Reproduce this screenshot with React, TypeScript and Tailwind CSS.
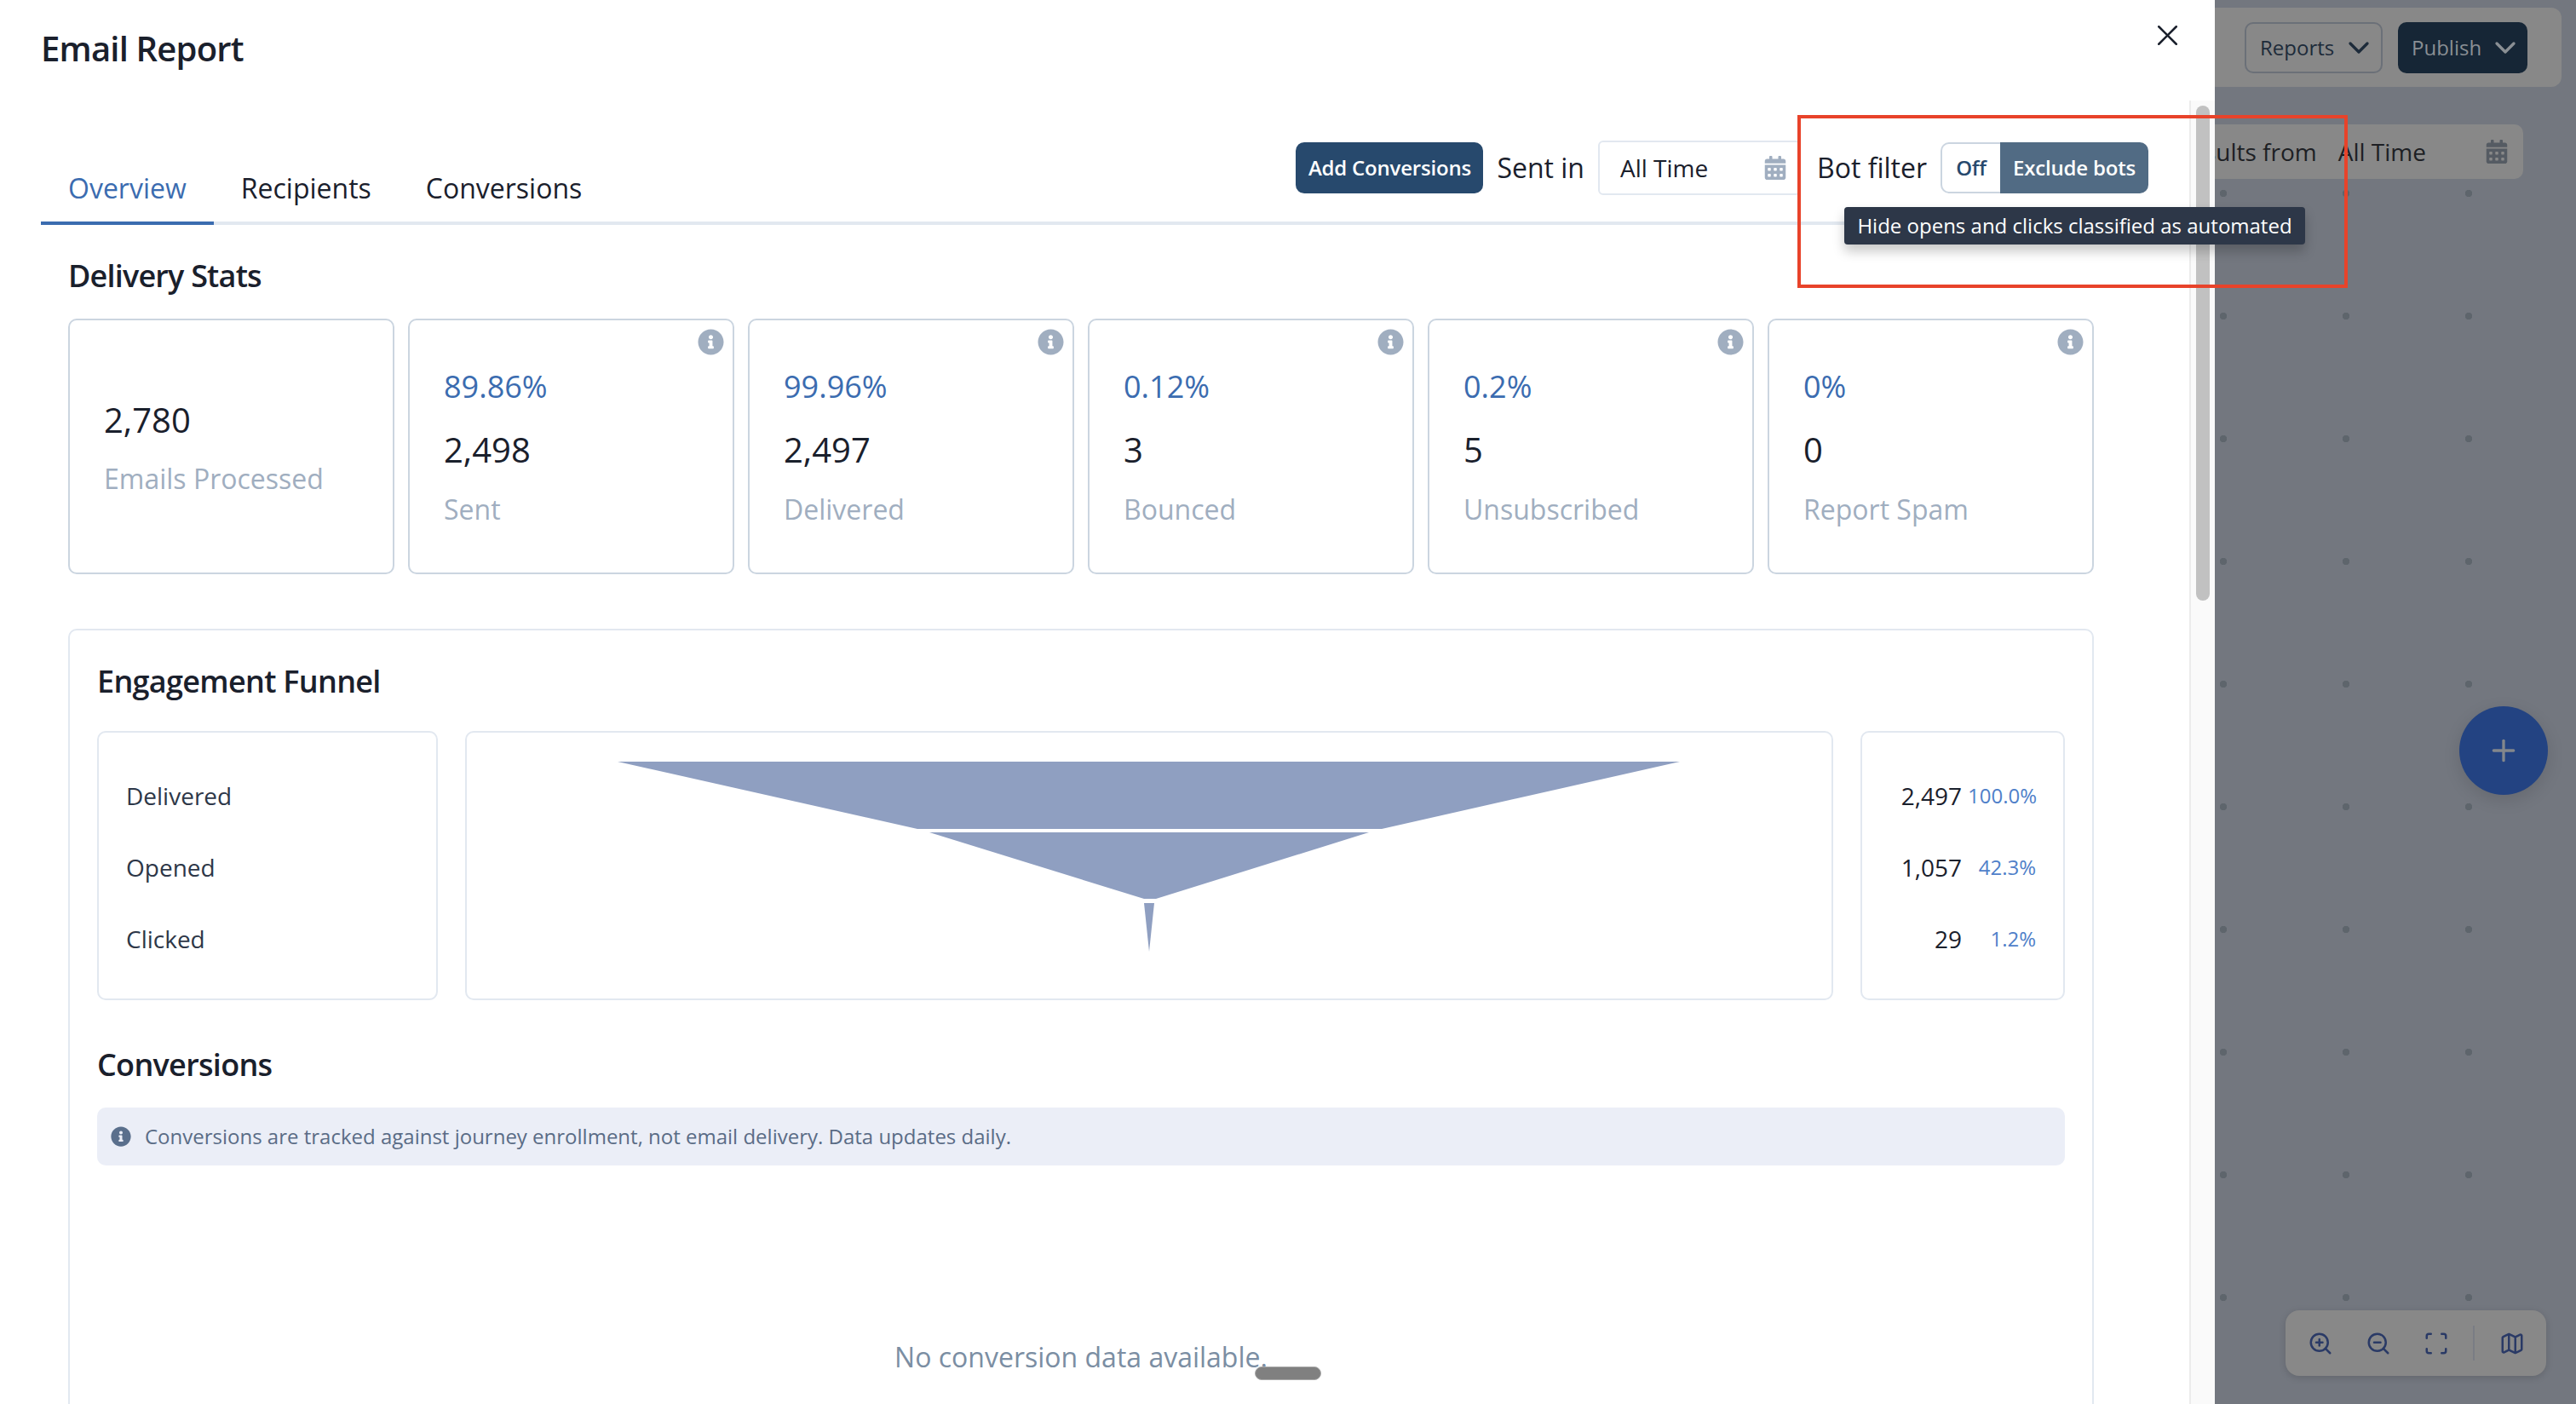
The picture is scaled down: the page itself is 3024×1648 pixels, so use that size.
import React from "react";
import { ChevronDown, Map as MapIcon, Scan, Plus, X, ZoomIn, ZoomOut } from "lucide-react";
import { FaCalendarAlt, FaInfoCircle } from "react-icons/fa";

const stats = [
  { pct: "89.86%", value: "2,498", label: "Sent" },
  { pct: "99.96%", value: "2,497", label: "Delivered" },
  { pct: "0.12%", value: "3", label: "Bounced" },
  { pct: "0.2%", value: "5", label: "Unsubscribed" },
  { pct: "0%", value: "0", label: "Report Spam" },
];

const funnelRows = [
  { label: "Delivered", value: "2,497", pct: "100.0%" },
  { label: "Opened", value: "1,057", pct: "42.3%" },
  { label: "Clicked", value: "29", pct: "1.2%" },
];

function StatCard({ pct, value, label }: { pct: string; value: string; label: string }) {
  return (
    <div className="relative h-[300px] rounded-[10px] border-2 border-[#cbd5e0] pl-[40px] pt-[54px]">
      <FaInfoCircle className="absolute right-[10px] top-[10px] text-[#a0aec0]" size={31} />
      <div className="text-[36px] leading-[48px] text-[#3b6cb0]">{pct}</div>
      <div className="mt-[26px] text-[40px] font-medium leading-[48px] text-[#1a202c]">{value}</div>
      <div className="mt-[22px] text-[32px] leading-[48px] text-[#a0aec0]">{label}</div>
    </div>
  );
}

export default function App() {
  return (
    <div className="relative flex h-[1648px] w-[3024px] overflow-hidden bg-white font-['Open_Sans',sans-serif]">
      {/* Modal */}
      <div className="relative z-10 flex h-full w-[2600px] shrink-0 flex-col bg-white">
        <div className="relative h-[118px] shrink-0 pl-[48px] pt-[33px]">
          <h1 className="text-[40px] font-semibold leading-[48px] tracking-[-0.8px] text-[#1a202c]">Email Report</h1>
          <X className="absolute left-[2524px] top-[21px] text-[#1a202c]" size={41} strokeWidth={1.5} />
        </div>
        <div className="flex min-h-0 flex-1">
          <main className="w-[2570px] shrink-0">
            <div className="mx-[48px] flex justify-between border-b-4 border-[#e2e8f0] pt-[47px]">
              <div className="flex items-end">
                <div className="-mb-[4px] border-b-4 border-[#3b6cb0] px-[32px] pb-[17px] text-[32px] leading-[44px] text-[#3b6cb0]">Overview</div>
                <div className="px-[32px] pb-[17px] text-[32px] leading-[44px] text-[#1a202c]">Recipients</div>
                <div className="px-[32px] pb-[17px] text-[32px] leading-[44px] text-[#1a202c]">Conversions</div>
              </div>
              <div className="flex items-center gap-[16px] pb-[31px]">
                <button className="h-[60px] w-[220px] rounded-[10px] bg-[#27496d] text-[24px] font-semibold tracking-[-0.2px] text-white">Add Conversions</button>
                <span className="text-[32px] text-[#1a202c]">Sent in</span>
                <div className="flex h-[64px] w-[238px] items-center justify-between rounded-[6px] border-2 border-[#e2e8f0] pl-[24px] pr-[14px] text-[28px] text-[#1a202c]">
                  <span>All Time</span>
                  <FaCalendarAlt className="text-[#a0aec0]" size={28} />
                </div>
                <span className="ml-[3px] text-[32px] text-[#1a202c]">Bot filter</span>
                <div className="relative flex h-[60px] w-[244px] text-[24px] font-semibold tracking-[-0.2px]">
                  <div className="flex w-[70px] items-center justify-center rounded-l-[10px] border-2 border-r-0 border-[#cbd5e0] text-[#27496d]">Off</div>
                  <div className="flex flex-1 items-center justify-center rounded-r-[10px] bg-[#516b84] text-white">Exclude bots</div>
                  <div className="absolute left-[-113px] top-[76px] z-20 flex h-[44px] w-[541px] items-center justify-center whitespace-nowrap rounded-[4px] bg-[#2d3748] text-[24px] font-normal tracking-normal text-white shadow-[0_8px_14px_rgba(0,0,0,0.22)]">
                    Hide opens and clicks classified as automated
                  </div>
                </div>
              </div>
            </div>

            <div className="ml-[80px] w-[2378px]">
              <h2 className="mt-[36px] text-[36px] font-semibold leading-[48px] tracking-[-0.8px] text-[#1a202c]">Delivery Stats</h2>
              <div className="mt-[26px] grid grid-cols-6 gap-[16px]">
                <div className="h-[300px] rounded-[10px] border-2 border-[#cbd5e0] pl-[40px] pt-[93px]">
                  <div className="text-[40px] font-medium leading-[48px] text-[#1a202c]">2,780</div>
                  <div className="mt-[21px] text-[32px] leading-[48px] text-[#a0aec0]">Emails Processed</div>
                </div>
                {stats.map((s) => (
                  <StatCard key={s.label} {...s} />
                ))}
              </div>

              <section className="mt-[64px] rounded-[10px] border-2 border-[#e2e8f0] px-[32px] pb-[60px] pt-[36px]">
                <h2 className="text-[36px] font-semibold leading-[48px] tracking-[-0.7px] text-[#1a202c]">Engagement Funnel</h2>
                <div className="mt-[34px] flex h-[316px] gap-[32px]">
                  <div className="flex w-[400px] flex-col justify-center rounded-[10px] border-2 border-[#e2e8f0] pl-[32px] pt-[3px]">
                    {funnelRows.map((r) => (
                      <div key={r.label} className="flex h-[84px] items-center text-[28px] text-[#2d3748]">{r.label}</div>
                    ))}
                  </div>
                  <div className="flex w-[1606px] justify-center rounded-[10px] border-2 border-[#e2e8f0] pt-[34px]">
                    <svg width="1248" height="224" viewBox="725 894 1248 224">
                      <polygon points="725,894 1972,894 1622,973 1077,973" fill="#8f9fc1" />
                      <polygon points="1091,977 1607,977 1357,1055 1343,1055" fill="#8f9fc1" />
                      <polygon points="1343,1060 1355,1060 1349,1117" fill="#8f9fc1" />
                    </svg>
                  </div>
                  <div className="flex w-[240px] flex-col justify-center rounded-[10px] border-2 border-[#e2e8f0] pt-[3px]">
                    {funnelRows.map((r) => (
                      <div key={r.label} className="flex h-[84px] items-center justify-end gap-[7px] pr-[32px]">
                        <span className="text-[28px] font-medium text-[#1a202c]">{r.value}</span>
                        <span className="w-[80px] text-right text-[24px] text-[#4f80c9]">{r.pct}</span>
                      </div>
                    ))}
                  </div>
                </div>
                <h2 className="mt-[52px] text-[36px] font-semibold leading-[48px] tracking-[-0.7px] text-[#1a202c]">Conversions</h2>
                <div className="mt-[26px] flex h-[68px] items-center gap-[16px] rounded-[10px] bg-[#ebeef7] pl-[16px] text-[24px] text-[#5a6c86]">
                  <FaInfoCircle className="text-[#5a6f8c]" size={24} />
                  <span>Conversions are tracked against journey enrollment, not email delivery. Data updates daily.</span>
                </div>
                <div className="mt-[203px] text-center text-[32px] leading-[44px] text-[#7b8ea3]">No conversion data available.</div>
              </section>
            </div>
          </main>
          <aside className="w-[30px] shrink-0 border-l-2 border-[#ececec] bg-[#fafafa] pt-[6px]">
            <div className="mx-auto h-[581px] w-[16px] rounded-full bg-[#c1c1c1]" />
          </aside>
        </div>
      </div>

      {/* Dimmed canvas */}
      <div className="relative flex-1 overflow-hidden bg-[#73777f] bg-[image:radial-gradient(circle,#5e656c_4px,transparent_4.5px)] bg-[length:144px_144px] bg-[position:-62px_11px]">
        <div className="absolute left-0 top-[9px] flex h-[93px] w-[407px] items-center justify-end gap-[18px] rounded-r-[12px] bg-[#888888] pr-[40px] text-[24px] font-medium">
          <div className="flex h-[60px] w-[162px] items-center justify-between rounded-[10px] border-2 border-[#6b7078] pl-[16px] pr-[6px] text-[#1d2b3a]">
            Reports <ChevronDown size={40} strokeWidth={2} />
          </div>
          <div className="flex h-[60px] w-[152px] items-center justify-between rounded-[10px] bg-[#162636] pl-[16px] pr-[6px] text-[#8a8f94]">
            Publish <ChevronDown size={40} strokeWidth={2} />
          </div>
        </div>
        <div className="absolute left-0 top-[146px] flex h-[64px] w-[362px] items-center justify-end whitespace-nowrap rounded-r-[10px] bg-[#888888] pr-[17px] text-[28px] text-[#1d1f24]">
          <span className="shrink-0">results from</span>
          <span className="ml-[25px] shrink-0">All Time</span>
          <FaCalendarAlt className="ml-[69px] shrink-0 text-[#555b63]" size={28} />
        </div>
        <div className="absolute left-[287px] top-[829px] flex h-[104px] w-[104px] items-center justify-center rounded-full bg-[#234382] text-[#83878c] shadow-[0_6px_20px_rgba(0,0,0,0.12)]">
          <Plus size={40} strokeWidth={2} />
        </div>
        <div className="absolute left-[83px] top-[1538px] flex h-[77px] w-[306px] items-center rounded-[16px] bg-[#888888] pl-[26px] text-[#2a3a66] shadow-[0_2px_8px_rgba(0,0,0,0.15)]">
          <ZoomIn size={30} strokeWidth={2} />
          <ZoomOut className="ml-[38px]" size={30} strokeWidth={2} />
          <Scan className="ml-[38px]" size={30} strokeWidth={2} />
          <div className="ml-[28px] h-[41px] w-[2px] bg-[#7a7d84]" />
          <MapIcon className="ml-[29px]" size={30} strokeWidth={2} />
        </div>
      </div>

      {/* Annotation and scroll handle */}
      <div className="absolute left-[2110px] top-[135px] z-30 h-[203px] w-[646px] border-4 border-[#e8432a]" />
      <div className="absolute left-[1473px] top-[1604px] z-30 h-[16px] w-[78px] rounded-full border border-[#a8a8a8] bg-[#808080]" />
    </div>
  );
}
